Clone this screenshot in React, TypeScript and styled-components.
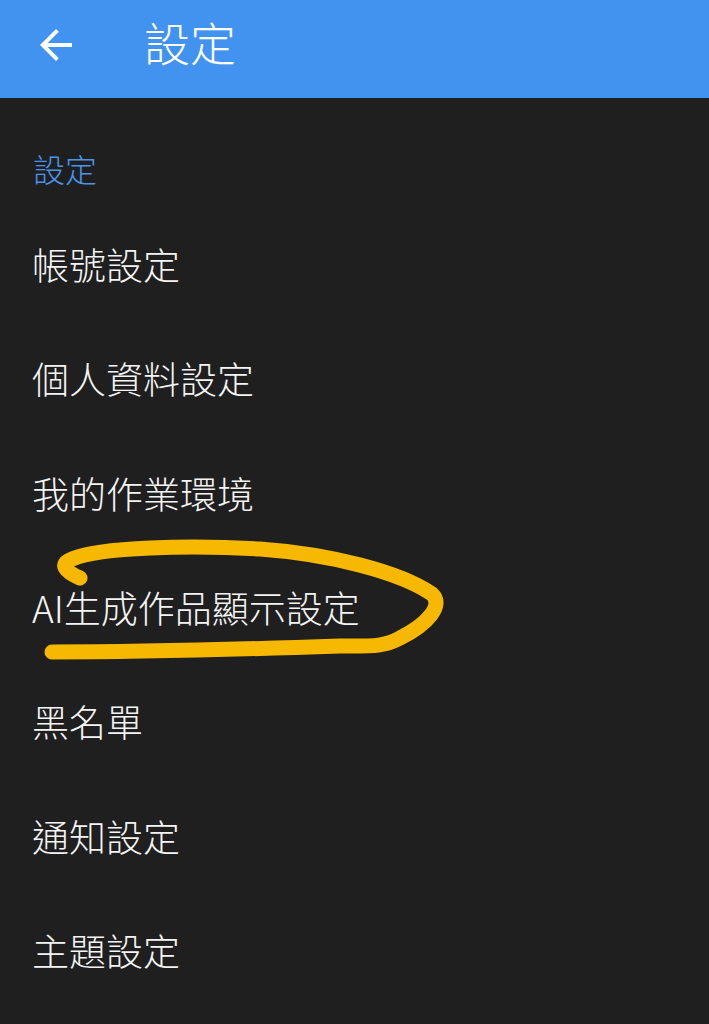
import { createGlobalStyle, styled } from 'styled-components';

const items = ['帳號設定', '個人資料設定', '我的作業環境', 'AI生成作品顯示設定', '黑名單', '通知設定', '主題設定'];

const GlobalStyle = createGlobalStyle`
  html, body {
    margin: 0;
    padding: 0;
    background-color: #1f1f1f;
  }
  body {
    font-family: 'Noto Sans CJK TC', 'Noto Sans', sans-serif;
  }
`;

const App = () => {
  return (
    <Page>
      <GlobalStyle />
      <Header>
        <BackButton aria-label="返回">
          <svg width="48" height="48" viewBox="0 0 24 24" fill="#ffffff">
            <path d="M20 11H7.83l5.59-5.59L12 4l-8 8 8 8 1.41-1.41L7.83 13H20v-2z" />
          </svg>
        </BackButton>
        <Title>設定</Title>
      </Header>

      <SectionLabel>設定</SectionLabel>
      <List>
        {items.map((item, index) => (
          <Row key={index}>{item}</Row>
        ))}
      </List>

      <Scribble width="709" height="1024" viewBox="0 0 709 1024">
        <path
          d="M80 578 C66 572 58 564 72 559 C100 547 190 545 260 549 C330 554 400 572 432 594 C444 605 428 624 400 638 C384 647 372 646 340 646 C250 649 130 652 52 652"
          fill="none"
          stroke="#f6b800"
          strokeWidth="15"
          strokeLinecap="round"
          strokeLinejoin="round"
        />
      </Scribble>
    </Page>
  );
};

const Page = styled.div`
  position: relative;
  width: 709px;
  min-height: 1024px;
  background-color: #1f1f1f;
  overflow: hidden;
`;

const Header = styled.header`
  height: 98px;
  background-color: #4293ef;
  display: flex;
  flex-direction: row;
  align-items: center;
  padding: 0 0 8px 32px;
  box-sizing: border-box;
`;

const BackButton = styled.div`
  width: 48px;
  height: 48px;
  display: flex;
  align-items: center;
  justify-content: center;
`;

const Title = styled.h1`
  margin: 0 0 8px 64px;
  font-size: 46px;
  font-weight: 300;
  line-height: 56px;
  color: #ffffff;
`;

const SectionLabel = styled.div`
  padding: 49px 0 18px 33px;
  font-size: 32px;
  font-weight: 300;
  line-height: 42px;
  color: #4a95ea;
`;

const List = styled.ul`
  margin: 0;
  padding: 0;
  list-style: none;
`;

const Row = styled.li`
  height: 114.3px;
  display: flex;
  align-items: center;
  padding-left: 32px;
  font-size: 37px;
  font-weight: 300;
  color: #f4f4f4;
`;

const Scribble = styled.svg`
  position: absolute;
  left: 0;
  top: 0;
  pointer-events: none;
`;

export default App;
